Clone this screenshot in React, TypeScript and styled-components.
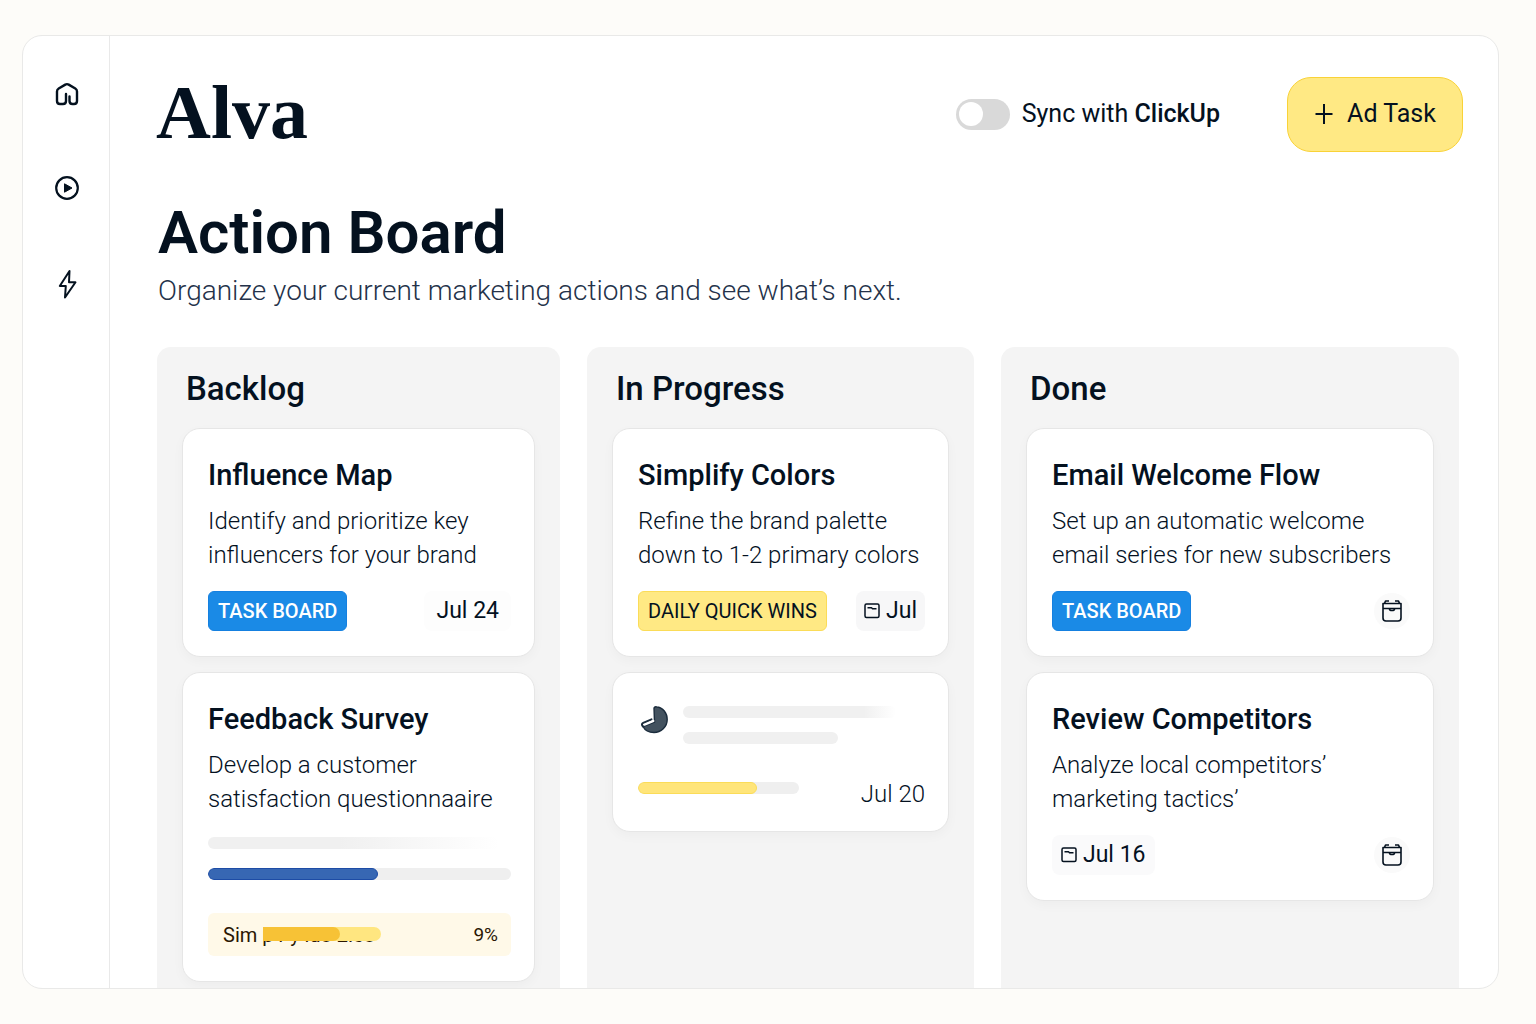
import React from 'react';
import styled, { createGlobalStyle, css } from 'styled-components';

const ink = '#04111f';

const GlobalStyle = createGlobalStyle`
  *, *::before, *::after { box-sizing: border-box; }
  body {
    margin: 0;
    background: #fdfcf9;
    color: ${ink};
    font-family: Roboto, "Liberation Sans", sans-serif;
  }
  h1, h2, h3, p { margin: 0; }
`;

const Page = styled.div`
  display: flex;
  min-height: 100vh;
  padding: 35px 37px 35px 22px;
`;

const Frame = styled.div`
  flex: 1;
  display: flex;
  min-width: 0;
  overflow: hidden;
  background: #fff;
  border: 1px solid #e9e9e8;
  border-radius: 20px;
`;

const Sidebar = styled.nav`
  flex: none;
  display: flex;
  flex-direction: column;
  align-items: center;
  gap: 64px;
  width: 87px;
  padding: 43px 0 0 1px;
  border-right: 1px solid #e9e9e9;
`;

const NavLink = styled.a`
  display: flex;
  padding: 2px;
  color: ${ink};
`;

const Main = styled.main`
  flex: 1;
  display: flex;
  flex-direction: column;
  min-width: 0;
`;

const Header = styled.header`
  display: flex;
  align-items: center;
  padding: 40px 35px 0 46px;
`;

const Logo = styled.div`
  margin-right: auto;
  padding-bottom: 4px;
  font: 700 76px/72px "Liberation Serif", serif;
`;

const SyncLabel = styled.label`
  display: flex;
  align-items: center;
  gap: 12px;
  margin-right: 67px;
  font-size: 25px;
  line-height: 32px;
  white-space: pre;
`;

const Strong = styled.span`
  font-weight: 500;
`;

const Toggle = styled.input`
  appearance: none;
  flex: none;
  display: flex;
  align-items: center;
  width: 54px;
  height: 31px;
  margin: 0;
  padding: 3px;
  border-radius: 16px;
  background: #d9d9d9;
  cursor: pointer;

  &::before {
    content: '';
    width: 24px;
    height: 24px;
    border-radius: 50%;
    background: #fff;
  }
  &:checked { justify-content: flex-end; background: #1a8ae8; }
`;

const AddButton = styled.button`
  display: flex;
  align-items: center;
  justify-content: center;
  gap: 13px;
  width: 176px;
  height: 75px;
  padding: 0;
  border: 1px solid #f9d237;
  border-radius: 24px;
  background: #ffe984;
  color: ${ink};
  font: 400 25px/32px Roboto, "Liberation Sans", sans-serif;
  cursor: pointer;
`;

const Intro = styled.section`
  padding: 49px 39px 38px 48px;
`;

const Title = styled.h1`
  font-size: 60px;
  line-height: 64px;
  font-weight: 600;
`;

const Subtitle = styled.p`
  margin-top: 8px;
  color: #24324a;
  font-size: 28px;
  line-height: 36px;
  font-weight: 300;
`;

const Board = styled.div`
  flex: 1;
  display: grid;
  grid-template-columns: 403fr 387fr 458fr;
  gap: 27px;
  padding: 0 39px 0 47px;
`;

const Column = styled.section`
  padding: 24px 25px 6px;
  border-radius: 14px 14px 0 0;
  background: #f4f4f4;
`;

const ColumnTitle = styled.h2`
  padding-left: 4px;
  font-size: 33px;
  line-height: 36px;
  font-weight: 500;
`;

const Cards = styled.div`
  display: flex;
  flex-direction: column;
  gap: 15px;
  padding-top: 21px;
`;

const Card = styled.article`
  padding: 29px 23px 25px 25px;
  border: 1px solid #e6e6e6;
  border-radius: 18px;
  background: #fff;
  box-shadow: 0 4px 12px rgba(0, 0, 0, 0.03);
`;

const CardTitle = styled.h3`
  font-size: 29px;
  line-height: 34px;
  font-weight: 500;
`;

const CardText = styled.p`
  margin-top: 12px;
  font-size: 24px;
  line-height: 34px;
  font-weight: 300;
`;

const CardFooter = styled.div`
  display: flex;
  align-items: center;
  justify-content: space-between;
  margin-top: 19px;
`;

const Badge = styled.span<{ $tone: 'blue' | 'yellow' }>`
  padding: 0 9px;
  border: 1px solid;
  border-radius: 6px;
  font-size: 20px;
  line-height: 38px;
  white-space: nowrap;
  ${({ $tone }) =>
    $tone === 'blue'
      ? css`background: #1a8ae6; border-color: #1580e0; color: #fff; font-weight: 500;`
      : css`background: #ffe984; border-color: #fbdc58; color: ${ink}; font-weight: 400;`}
`;

const DateChip = styled.span<{ $tint: string; $side: number }>`
  display: flex;
  align-items: center;
  gap: 6px;
  padding: 0 ${({ $side }) => $side}px;
  border-radius: 8px;
  background: ${({ $tint }) => $tint};
  font-size: 23px;
  line-height: 40px;
`;

const RoundButton = styled.button`
  display: flex;
  align-items: center;
  justify-content: center;
  width: 36px;
  height: 36px;
  padding: 0;
  border: 0;
  border-radius: 50%;
  background: #fafafa;
  color: ${ink};
`;

const Track = styled.div<{ $width?: string }>`
  overflow: hidden;
  width: ${({ $width }) => $width ?? '100%'};
  height: 12px;
  border-radius: 6px;
  background: #efefef;
`;

const Fill = styled.div<{ $color: string; $edge: string }>`
  height: 100%;
  border: 1px solid ${({ $edge }) => $edge};
  border-radius: 6px;
  background: ${({ $color }) => $color};
`;

const Skeleton = styled.div<{ $width: string; $fade?: number }>`
  width: ${({ $width }) => $width};
  height: 12px;
  border-radius: 6px;
  background: ${({ $fade }) =>
    $fade ? `linear-gradient(90deg, #f0f0f0 ${$fade}%, #ffffff)` : '#f0f0f0'};
`;

const Stack = styled.div`
  display: flex;
  flex-direction: column;
  gap: 19px;
  margin-top: 21px;
`;

const QuickWin = styled.div`
  display: flex;
  justify-content: space-between;
  margin-top: 33px;
  padding: 0 13px 0 15px;
  border-radius: 6px;
  background: #fff9e8;
  color: #2a1703;
  font-size: 20px;
  line-height: 43px;
`;

const QuickWinLabel = styled.div`
  position: relative;
  white-space: pre;
  padding-top: 2px;
  line-height: 41px;
`;

const QuickWinValue = styled.span`
  font-size: 19px;
`;

const Overlay = styled.div`
  position: absolute;
  top: 14px;
  left: 40px;
  width: 118px;
  height: 14px;
  border-radius: 0 7px 7px 0;
  background: #ffe680;
`;

const OverlayFill = styled.div`
  height: 100%;
  border-radius: 0 7px 7px 0;
  background: #f7c236;
`;

const PreviewTop = styled.div`
  display: flex;
  gap: 15px;
  padding: 4px 0 0 2px;
`;

const PreviewLines = styled.div`
  flex: 1;
  display: flex;
  flex-direction: column;
  gap: 14px;
`;

const PreviewBottom = styled.div`
  display: flex;
  align-items: flex-start;
  justify-content: space-between;
  padding-top: 38px;
`;

const PreviewDate = styled.span`
  font-size: 24px;
  line-height: 24px;
  font-weight: 300;
`;

const HomeIcon = () => (
  <svg width="26" height="26" viewBox="0 0 26 26" fill="none" stroke="currentColor" strokeWidth="2.4" strokeLinejoin="round" strokeLinecap="round">
    <path d="M12 13v7q0 3-3 3H6q-3 0-3-3V10.500q0-2 1.700-3L11.300 3.600q1.700-1 3.400 0L21.300 7.500q1.700 1 1.700 3V20q0 3-3 3h-1.500q-3 0-3-3v-4.500" />
  </svg>
);

const PlayIcon = () => (
  <svg width="26" height="26" viewBox="0 0 26 26" fill="none" stroke="currentColor">
    <circle cx="13" cy="13" r="10.800" strokeWidth="2.200" />
    <path d="M10.500 8.800v8.400l7.500-4.200z" fill="currentColor" strokeWidth="1" strokeLinejoin="round" />
  </svg>
);

const BoltIcon = () => (
  <svg width="26" height="30" viewBox="0 0 26 30" fill="none" stroke="currentColor" strokeWidth="2" strokeLinejoin="round">
    <path d="M15.500 2L5.800 17h6l-.8 11.500L21.500 13.200h-6.500z" />
  </svg>
);

const PlusIcon = () => (
  <svg width="20" height="22" viewBox="0 0 20 22" fill="none" stroke="currentColor" strokeWidth="2">
    <path d="M10 1v20M1.500 11h17" />
  </svg>
);

const BoxIcon = () => (
  <svg width="16" height="16" viewBox="0 0 16 16" fill="none" stroke="currentColor" strokeWidth="1.500" strokeLinejoin="round">
    <rect x="1" y="1" width="14" height="13.500" rx="1.500" />
    <path d="M3.500 4.800h4l1 1h4" />
  </svg>
);

const CalendarIcon = () => (
  <svg width="22" height="24" viewBox="0 0 22 24" fill="none" stroke="currentColor" strokeWidth="1.600" strokeLinejoin="round">
    <path d="M2 4.500h18V19q0 3-3 3H5q-3 0-3-3zM2 9.500h18" />
    <path d="M3.500 4.500L4.500 2H8M18.500 4.500L17.500 2H14M8.500 10q0 1.500 2.500 1.500t2.500-1.500" />
  </svg>
);

const PieIcon = () => (
  <svg width="28" height="28" viewBox="0 0 28 28">
    <path d="M14 2q.5-1.500 2.500-1.200C23 1.500 27.200 7 27.200 13.500 27.200 21 21 26.500 14 26.500c-5 0-9-2-11-6L14.500 16z" fill="#43525f" stroke="#1b2c3c" strokeWidth="1.400" strokeLinejoin="round" />
    <path d="M3 20.500Q.8 18 3.200 16.800L11.500 13.400" fill="none" stroke="#1b2c3c" strokeWidth="2" strokeLinecap="round" />
    <path d="M4.500 18.800L13.500 15" stroke="#fff" strokeWidth="2" strokeLinecap="round" />
  </svg>
);

function Progress({ value, width, color, edge, label }: { value: number; width?: string; color: string; edge: string; label: string }) {
  return (
    <Track $width={width} role="progressbar" aria-label={label} aria-valuenow={value} aria-valuemin={0} aria-valuemax={100}>
      <Fill $color={color} $edge={edge} style={{ width: `${value}%` }} />
    </Track>
  );
}

export default function App() {
  return (
    <>
      <GlobalStyle />
      <Page>
        <Frame>
          <Sidebar aria-label="Main">
            <NavLink href="#home" aria-label="Home"><HomeIcon /></NavLink>
            <NavLink href="#play" aria-label="Play"><PlayIcon /></NavLink>
            <NavLink href="#actions" aria-label="Actions"><BoltIcon /></NavLink>
          </Sidebar>
          <Main>
            <Header>
              <Logo>Alva</Logo>
              <SyncLabel>
                <Toggle type="checkbox" />
                <span>Sync with <Strong>ClickUp</Strong></span>
              </SyncLabel>
              <AddButton type="button"><PlusIcon />Ad Task</AddButton>
            </Header>
            <Intro>
              <Title>Action Board</Title>
              <Subtitle>Organize your current marketing actions and see what’s next.</Subtitle>
            </Intro>
            <Board>
              <Column>
                <ColumnTitle>Backlog</ColumnTitle>
                <Cards>
                  <Card>
                    <CardTitle>Influence Map</CardTitle>
                    <CardText>Identify and prioritize key<br />influencers for your brand</CardText>
                    <CardFooter>
                      <Badge $tone="blue">TASK BOARD</Badge>
                      <DateChip $tint="#fdfdfd" $side={12}>Jul 24</DateChip>
                    </CardFooter>
                  </Card>
                  <Card>
                    <CardTitle>Feedback Survey</CardTitle>
                    <CardText>Develop a customer<br />satisfaction questionnaaire</CardText>
                    <Stack>
                      <Skeleton $width="96%" $fade={45} />
                      <Progress value={56} color="#3767b3" edge="#1d4ca6" label="Feedback Survey" />
                    </Stack>
                    <QuickWin>
                      <QuickWinLabel>
                        Sim p r y luo 2.co
                        <Overlay><OverlayFill style={{ width: '65%' }} /></Overlay>
                      </QuickWinLabel>
                      <QuickWinValue>9%</QuickWinValue>
                    </QuickWin>
                  </Card>
                </Cards>
              </Column>
              <Column>
                <ColumnTitle>In Progress</ColumnTitle>
                <Cards>
                  <Card>
                    <CardTitle>Simplify Colors</CardTitle>
                    <CardText>Refine the brand palette<br />down to 1-2 primary colors</CardText>
                    <CardFooter>
                      <Badge $tone="yellow">DAILY QUICK WINS</Badge>
                      <DateChip $tint="#f7f7f8" $side={8}><BoxIcon />Jul</DateChip>
                    </CardFooter>
                  </Card>
                  <Card>
                    <PreviewTop>
                      <PieIcon />
                      <PreviewLines>
                        <Skeleton $width="88%" $fade={85} />
                        <Skeleton $width="64%" />
                      </PreviewLines>
                    </PreviewTop>
                    <PreviewBottom>
                      <Progress value={74} width="56%" color="#ffe57a" edge="#fbdc58" label="Task progress" />
                      <PreviewDate>Jul 20</PreviewDate>
                    </PreviewBottom>
                  </Card>
                </Cards>
              </Column>
              <Column>
                <ColumnTitle>Done</ColumnTitle>
                <Cards>
                  <Card>
                    <CardTitle>Email Welcome Flow</CardTitle>
                    <CardText>Set up an automatic welcome<br />email series for new subscribers</CardText>
                    <CardFooter>
                      <Badge $tone="blue">TASK BOARD</Badge>
                      <RoundButton type="button" aria-label="Set date"><CalendarIcon /></RoundButton>
                    </CardFooter>
                  </Card>
                  <Card>
                    <CardTitle>Review Competitors</CardTitle>
                    <CardText>Analyze local competitors’<br />marketing tactics’</CardText>
                    <CardFooter>
                      <DateChip $tint="#fafafb" $side={9}><BoxIcon />Jul 16</DateChip>
                      <RoundButton type="button" aria-label="Set date"><CalendarIcon /></RoundButton>
                    </CardFooter>
                  </Card>
                </Cards>
              </Column>
            </Board>
          </Main>
        </Frame>
      </Page>
    </>
  );
}
